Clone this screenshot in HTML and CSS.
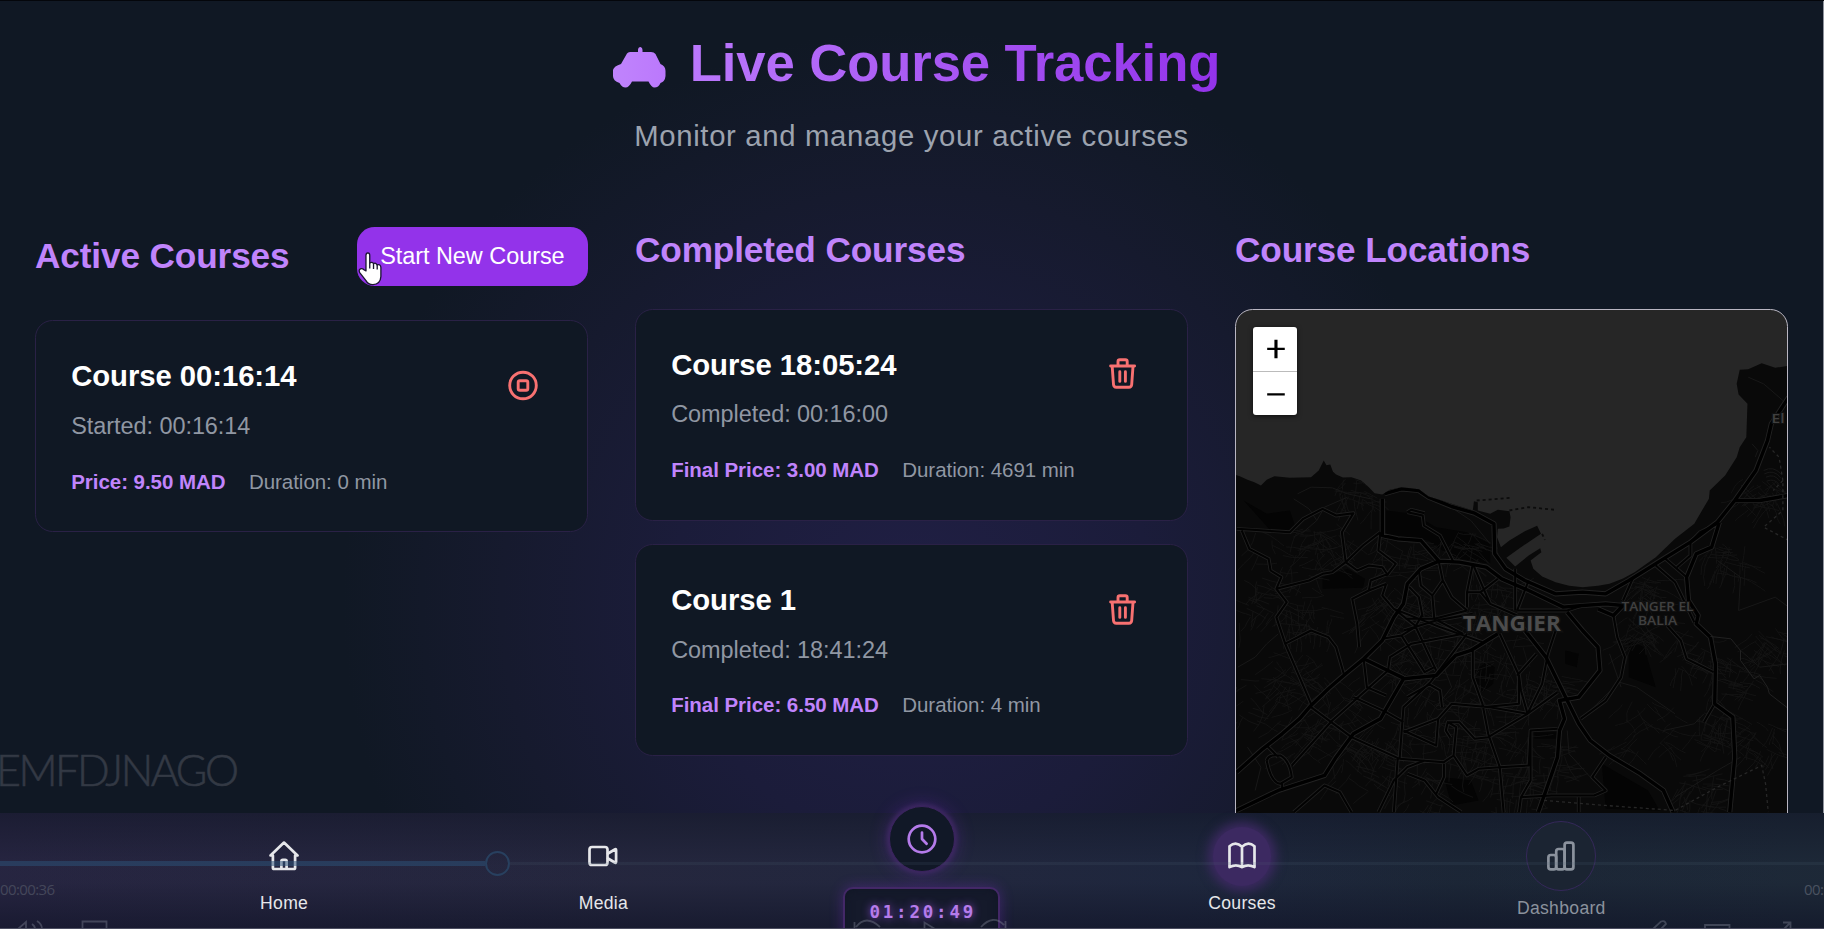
FILE: index.html
```html
<!DOCTYPE html>
<html lang="en">
<head>
<meta charset="utf-8">
<title>Live Course Tracking</title>
<link rel="stylesheet" href="styles.css">
</head>
<body>
<svg class="defs" width="0" height="0">
  <symbol id="trash" viewBox="0 0 35 35">
    <path d="M5.6 10h24M13 9.5V5.6q0-1.8 1.8-1.8h5.6q1.8 0 1.8 1.8v3.9M7.2 10.5l1.3 18q.2 2.8 2.8 2.8h12.6q2.6 0 2.8-2.8l1.3-18M14.8 15.8v9.6M20.4 15.8v9.6"/>
  </symbol>
</svg>
<div class="screen">
  <main class="content">
    <header class="hero">
      <h1 class="title">
        <svg class="taxi" viewBox="0 0 54 42">
          <defs><linearGradient id="taxiFill"><stop offset="0" stop-color="#c084fc"/><stop offset="1" stop-color="#bb78fc"/></linearGradient></defs>
          <path fill="url(#taxiFill)" d="M15 6.5Q16 5 18 5H26V3Q26.200 0 28.500 0Q30.500 .5 30.500 3V5H39Q42 5 43.500 7L48.500 17Q53.500 19 53.500 24V29Q53 34.500 48.500 36Q46.500 40.500 42.500 40.500Q39.500 40.500 36.500 34.500H20Q17 40.500 13.500 40.500Q10 40.500 7.500 36Q1 34 1 29V23Q2 19 9 17Z"/>
        </svg>
        <span class="title-text">Live Course Tracking</span>
      </h1>
      <p class="subtitle">Monitor and manage your active courses</p>
    </header>
    <div class="columns">
      <section>
        <div class="section-head">
          <h2>Active Courses</h2>
          <button class="start">Start New Course</button>
        </div>
        <article class="card">
          <div>
            <h3>Course 00:16:14</h3>
            <p class="when">Started: 00:16:14</p>
            <p class="facts"><b>Price: 9.50 MAD</b><span>Duration: 0 min</span></p>
          </div>
          <button class="act"><svg viewBox="0 0 35 35"><circle cx="18" cy="17.5" r="13.300"/><rect x="13.200" y="12.700" width="9.600" height="9.600" rx="1.600"/></svg></button>
        </article>
      </section>
      <section>
        <h2>Completed Courses</h2>
        <div class="stack">
          <article class="card">
            <div>
              <h3>Course 18:05:24</h3>
              <p class="when">Completed: 00:16:00</p>
              <p class="facts"><b>Final Price: 3.00 MAD</b><span>Duration: 4691 min</span></p>
            </div>
            <button class="act"><svg><use href="#trash"/></svg></button>
          </article>
          <article class="card">
            <div>
              <h3>Course 1</h3>
              <p class="when">Completed: 18:41:24</p>
              <p class="facts"><b>Final Price: 6.50 MAD</b><span>Duration: 4 min</span></p>
            </div>
            <button class="act"><svg><use href="#trash"/></svg></button>
          </article>
        </div>
      </section>
      <section>
        <h2>Course Locations</h2>
        <div class="map">
          <svg class="map-art" viewBox="0 0 553 600">
            <defs>
              <clipPath id="landClip"><use href="#land"/></clipPath>
            </defs>
            <g transform="matrix(.3852 0 0 .3333 -15.500 190.500)">
              <path id="land" class="land" d="M30-80L50-73 70-62 88-55 105-45 120-62 140-73 180-68 235-70 255-90 268-120 275-106 285-108 292-86 300-78 318-69 340-70 365-60 385-40 400-22 420-18 440-32 470-40 515-34 540-12 600 10 645 26 655 30 658 2 668 5 668 30 700 40 720 28 750 32 753 50 750 78 735 84 720 85 718 110 728 140 750 120 790 92 822 76 832 100 780 140 742 172 765 198 800 165 830 143 833 155 805 180 812 205 835 228 870 245 905 256 940 260 980 256 1010 250 1045 234 1075 215 1130 170 1180 115 1230 70 1255 20 1268-5 1270-30 1310-75 1340-130 1348-160 1365-190 1368-290 1345-318 1340-350 1348-392 1370-394 1405-412 1440-398 1480-405V1250H30Z"/>
              <g clip-path="url(#landClip)">
                <g class="parks"><path d="M265 230L330 205 375 235 370 262 265 265ZM660 510L690 485 712 500 708 550 680 575 660 540ZM500 40L560 80 640 95 700 130 700 190 600 170 540 120 430 100 430 30ZM895 450L930 460 925 500 895 490ZM580 830L650 840 670 900 600 915ZM815 695H875V715H815ZM990 790L1110 870 1140 930 1000 925ZM1060 420L1100 440 1130 560 1060 530ZM60 0L120 40 180 30 200 100 130 90Z"/></g>
                <path id="minor" class="minor"/>
                <path class="lane" d="M560-10L650 60 700 130M1290 180L1350 230 1345 330 1440 290 1475 320M900 690L905 760 960 830M1180 640L1080 560 1035 545 960 630M1150 690L1230 670 1255 640M1010 460L1040 560M1370-370L1410-350 1460-300M1380-170L1395-150 1388-130M1475 490L1400 500 1370 470 1350 450M45 500L90 470 120 430 150 400M90 870L105 800 70 740M1180 890L1290 810 1350 770M200-20L235-40 290-38 330-20 390-5M250 60L270 20 330-10M190-5L230 25 250 60 210 100M560 620L600 560 580 500M1410-90q25-15 45 10M1412-80q25-15 42 12M1416-70q22-12 36 12M1418-58q20-10 32 10"/>
                <g id="mains"></g>
                <path class="lane bright" d="M1272 408L1325 415 1350 450 1350 480 1385 535 1400 525 1420 560 1425 580 1475 625"/>
                <path class="rail" d="M840 900L1000 915 1180 930 1290 860 1405 795 1415 850 1422 935M1475 120L1410 80 1460 30 1460-60 1435-30M1460-60L1450-130 1425-160"/>
              </g>
              <path class="pier" d="M665 0L752-8M750 30L800 20 868 28M835 100L842 118"/>
            </g>
            <g class="labels">
              <text class="city" x="275.800" y="320.500" textLength="98" lengthAdjust="spacingAndGlyphs">TANGIER</text>
              <text x="421.500" y="301" textLength="72" lengthAdjust="spacingAndGlyphs">TANGER EL</text>
              <text x="421.500" y="314.500" textLength="39" lengthAdjust="spacingAndGlyphs">BALIA</text>
              <text x="542" y="112.500" textLength="13" lengthAdjust="spacingAndGlyphs">El</text>
            </g>
          </svg>
          <div class="zoom">
            <button><svg viewBox="0 0 44 44"><path d="M14 22.500h18"/><path class="bar" d="M23 13v19"/></svg></button>
            <button><svg viewBox="0 0 44 44"><path d="M14 23h18"/></svg></button>
          </div>
        </div>
      </section>
    </div>
    <div class="watermark">EMFDJNAGO</div>
  </main>

  <nav class="nav">
    <a class="item"><span class="disc"><svg viewBox="0 0 30 30"><path d="M3.900 14.500H1.500L15 1.600 28.500 14.500H26.100M3.900 14.500v12.200q0 1.300 1.300 1.300h19.600q1.300 0 1.300-1.300v-12.200M12.400 28v-7.800q0-1.400 1.400-1.400h2.400q1.400 0 1.400 1.400V28"/></svg></span><span>Home</span></a>
    <a class="item"><span class="disc"><svg viewBox="0 0 30 30"><rect x="1.500" y="6" width="18" height="18" rx="2.600"/><path d="M20 12.500l6.800-4q1.300-.8 1.300.7v11.600q0 1.500-1.300.7L20 17.500"/></svg></span><span>Media</span></a>
    <div class="clock">
      <span class="clock-disc"><svg viewBox="0 0 30 30"><circle cx="15" cy="15" r="13.300"/><path d="M15 8.500V15l4.600 4.800"/></svg></span>
      <span class="timer">01:20:49</span>
    </div>
    <a class="item current"><span class="disc"><svg viewBox="0 0 30 30"><path d="M15 5.800Q9-.2 2.500 5.200V26.200Q9 22.500 15 26.200Q21 22.500 27.500 26.200V5.200Q21-.2 15 5.800V26.200"/></svg></span><span>Courses</span></a>
    <a class="item dim"><span class="disc large"><svg viewBox="0 0 30 30"><rect x="2.400" y="14" width="7.800" height="14.300" rx="2.400"/><rect x="10.200" y="8" width="8.400" height="20.300" rx="2.400"/><rect x="18.600" y="1.700" width="8.800" height="26.600" rx="2.400"/></svg></span><span>Dashboard</span></a>
  </nav>

  <div class="player">
    <div class="track"><i class="played"></i><i class="knob"></i><i class="rest"></i></div>
    <div class="times"><span>00:00:36</span><span class="end">00:</span></div>
    <svg class="controls" viewBox="0 0 1824 12"><path d="M18 12L26 5V12M32 7q3 2 3 5M37 4q5 3 5 8M82.500 12V4.500h24V12M854.500 12V5M856 10Q866-3 880 10M924.500 12V5.500L935 12M981 10Q993-3 1004 8M1005.500 4v8M1653 12L1661 4.500q4-1.500 5 2.500L1661 12M1705 12V8h24.500v4M1783 5.500h7.500V12M1784 12l6.500-6.500"/></svg>
  </div>
  <svg class="cursor" viewBox="0 0 26 36"><path d="M8.200 20V3.600Q8.300 1 10.200 1Q12.200 1.100 12.200 3.600V11.600Q14.800 10 16.200 12.300Q18.700 11 20 13.600Q23.800 12.600 24 16.500V26Q23.500 34.300 15.500 34.500Q10.500 34.500 8 30L1.600 21.800Q0 18.500 3 17.600Q5 17.500 6 18.800Z"/><path d="M12.200 11.500v6M16.200 12.500v5.500M20.100 13.800v4.700"/></svg>
</div>
<script src="map.js"></script>
</body>
</html>
```
FILE: styles.css
```css
:root { --violet: #c084fc; }
* { box-sizing: border-box; margin: 0; padding: 0; }
body { background: #111827; font-family: "Liberation Sans", Arial, sans-serif; color: #fff; }
.defs { position: absolute; }
button { font: inherit; color: inherit; border: 0; background: none; }
.screen {
  position: relative; width: 1824px; height: 929px; overflow: hidden;
  display: flex; flex-direction: column;
  background: radial-gradient(circle 570px at 912px 600px, #201f44 0%, #1b1c3a 42%, #161a2e 72%, #101824 100%) #101824;
}
.screen::after { content: ""; position: absolute; inset: 0; pointer-events: none; border-top: 1px solid #04060b; border-bottom: 1px solid #4b4d60; }
.content { position: relative; height: 813px; overflow: hidden; padding: 34px 35px 0 35px; flex: none; border-right: 1px solid #8e929c; }
.hero { text-align: center; height: 193px; }
.title { display: flex; justify-content: center; align-items: center; gap: 24px; height: 58.6px; font-size: 52.7px; line-height: 58.6px; padding-left: 9px; letter-spacing: -.12px; }
.taxi { width: 54px; height: 42px; margin-top: 9px; }
.title-text { background: linear-gradient(90deg, #bb78fc, #9333ea); -webkit-background-clip: text; background-clip: text; color: transparent; white-space: nowrap; }
.subtitle { margin-top: 22.2px; font-size: 29.3px; line-height: 41px; letter-spacing: .67px; color: #9ca3af; }
.columns { display: grid; grid-template-columns: repeat(3, minmax(0, 1fr)); gap: 47px; }
.section-head { display: flex; justify-content: space-between; align-items: center; height: 58.6px; margin-bottom: 34.6px; }
h2 { font-size: 35.2px; line-height: 46.9px; letter-spacing: -.12px; color: var(--violet); white-space: nowrap; }
section > h2 { margin-bottom: 34.6px; }
.start { height: 58.6px; padding: 0 23.4px; border-radius: 17.6px; background: #9333ea; font-size: 23.44px; letter-spacing: -.03px; white-space: nowrap; }
.stack { display: grid; gap: 23.4px; }
.card { display: flex; justify-content: space-between; align-items: flex-start; height: 212px; padding: 34.9px 35.2px; border: 1px solid #2a2146; border-radius: 17.6px; background: #101824; white-space: nowrap; }
.card h3 { margin-top: -.8px; font-size: 29.3px; line-height: 41px; letter-spacing: -.07px; }
.when { margin-top: 12.700px; font-size: 23.44px; line-height: 35.2px; letter-spacing: -.04px; color: #9097a3; }
.facts { display: flex; gap: 23.4px; margin-top: 22.4px; font-size: 20.5px; line-height: 29.3px; letter-spacing: -.04px; color: #9097a3; }
.facts b { color: var(--violet); }
.act { flex: none; width: 58.6px; height: 58.6px; padding: 11.8px; }
.act svg { display: block; width: 35px; height: 35px; fill: none; stroke: #f87171; stroke-width: 2.9; stroke-linecap: round; stroke-linejoin: round; }
.map { position: relative; height: 602px; border: 1px solid #b9b6c2; border-radius: 17.6px; overflow: hidden; background: #262626; }
.map-art { display: block; width: 553px; height: 600px; }
.map-art path { vector-effect: non-scaling-stroke; fill: none; stroke-linejoin: round; }
.map-art .land { fill: #090909; }
.map-art .parks path { fill: #040404; }
.minor { stroke: #151515; stroke-width: .8; }
.lane { stroke: #181818; stroke-width: 1; }
.lane.bright { stroke: #222; }
.casing { stroke: #1f1f1f; stroke-width: 3.8; }
.road { stroke: #020202; stroke-width: 2; }
.casing.main { stroke: #222; stroke-width: 5.2; }
.road.main { stroke: #000; stroke-width: 3.4; }
.rail, .pier { stroke: #272727; stroke-width: 1.3; stroke-dasharray: 3 3; }
.map-art .pier { stroke: #0c0c0c; stroke-width: 1.8; }
.labels text { font: 600 12.500px "Open Sans", sans-serif; fill: #404040; text-anchor: middle; stroke: #101010; stroke-width: 2px; paint-order: stroke; }
.labels .city { font-size: 21px; font-weight: 700; fill: #4c4c4c; stroke-width: 3px; }
.zoom { position: absolute; left: 17px; top: 17px; width: 44px; height: 88px; background: #fff; border-radius: 3px; box-shadow: 0 1px 5px rgba(0,0,0,.65); display: grid; }
.zoom button { height: 44px; }
.zoom button + button { border-top: 1px solid #bbb; }
.zoom svg { display: block; width: 44px; height: 43px; fill: none; stroke: #000; stroke-width: 2.3; }
.zoom .bar { stroke-width: 3.2; }
.watermark { position: absolute; left: -4px; top: 740px; font: 300 43px/60px Lato, sans-serif; letter-spacing: -2.450px; color: #333944; -webkit-text-stroke: .6px #333944; }
.nav {
  position: relative; height: 116px; flex: none; padding: 0 103px 0 124.5px;
  display: grid; grid-template-columns: repeat(5, 1fr); align-items: center; justify-items: center;
  background:
    linear-gradient(180deg, rgba(14,18,34,.5) 0%, rgba(14,18,34,.1) 45%, rgba(14,18,34,.1) 60%, rgba(14,17,36,.6) 100%),
    linear-gradient(90deg, #292744 0%, #272941 35%, #242941 52%, #202940 65%, #1d2838 80%, #1f2b3a 98%);
}
.item { display: flex; flex-direction: column; align-items: center; gap: 6px; font-size: 17.6px; line-height: 23.4px; letter-spacing: .3px; color: #e6e7ea; }
.disc { width: 58.6px; height: 58.6px; display: grid; place-items: center; border-radius: 50%; }
.disc svg, .clock-disc svg { width: 30px; height: 30px; fill: none; stroke: currentColor; stroke-width: 2.7; stroke-linecap: round; stroke-linejoin: round; }
.current .disc { background: #3c2961; box-shadow: 0 0 11px 5px #3c2961; }
.dim { color: #8b929d; }
.large { width: 70px; height: 70px; background: #1b2432; border: 1px solid #35285a; }
.clock { align-self: start; margin: -7px 2px 0 0; height: 123px; overflow: visible; display: flex; flex-direction: column; align-items: center; gap: 15px; color: #b57bea; }
.clock-disc { flex: none; width: 66px; height: 66px; display: grid; place-items: center; border-radius: 50%; background: #111827; border: 1px solid #3b245f; box-shadow: 0 0 4px 2px #3e2862, 0 0 20px rgba(147,51,234,.3); }
.timer { flex: none; width: 157px; height: 60px; padding-left: 2px; text-align: center; border: 2px solid #432867; border-radius: 10px; background: #151a2b; font: 700 17.5px/47px "DejaVu Sans Mono", monospace; letter-spacing: 2.8px; text-shadow: 0 0 9px #8b4bd0; box-shadow: inset 0 0 10px #101625, 0 0 14px rgba(147,51,234,.3); }
.player { position: absolute; left: 0; right: 0; bottom: 0; height: 78px; pointer-events: none; }
.track { display: flex; align-items: center; height: 25px; }
.played { width: 485px; height: 5px; background: rgba(45,82,120,.52); }
.knob { width: 25px; height: 25px; border: 2.500px solid #28405f; border-radius: 50%; }
.rest { flex: 1; height: 3px; background: rgba(80,104,120,.15); }
.times { display: flex; justify-content: space-between; padding-top: 1px; font: 15px/24px "Open Sans", sans-serif; letter-spacing: -.6px; color: #44475a; }
.end { width: 20px; overflow: hidden; color: #4a5260; }
.controls { position: absolute; left: 0; bottom: 0; width: 1824px; height: 12px; fill: none; stroke: rgba(125,128,145,.42); stroke-width: 1.8; }
.cursor { position: absolute; left: 358px; top: 252px; width: 25px; height: 34px; fill: #fff; stroke: #1b1530; stroke-width: 1.4; stroke-linejoin: round; }
```
FILE: map.js
```js
// Trunk roads and main streets, each drawn as a grey casing below a black centre line.
var streets = 'M42 85L180 95 215 55 265 25 300 45 345 38 315 95 325 185 290 215 265 220 230 240 145 265M55 90L75 145 125 175 130 210 158 230 145 265 172 305 145 350 168 430 235 610M325 185L370 135 415 95M325 185L355 210 385 195 420 200 435 225M485 35L525 45 528 75 570 105 605 185M485 35L495 28 530 38M385 270L390 240 435 220 455 190 410 150 415 95M360 440L355 370 342 295 385 270 430 250M167 430L235 390 280 410 300 440 320 520M372 480L380 560 430 585M120 735L150 770M185 795L290 660 435 510 440 470 495 430 630 400M235 620L340 710 465 775M345 590L430 635 475 665M465 775L475 620 545 545 640 400M465 775L580 785 605 765 640 825 670 805 725 800 800 795 805 690 875 685M605 765L612 680 590 665 585 690 597 712M590 665L620 665 660 715 695 710 797 640 875 575M475 695L565 655 600 610 700 620 797 640M450 935L460 775M410 935L450 840 485 800 530 780M485 820L530 840 565 890 625 935M560 880L580 830 580 790M735 935L725 800 695 700 680 610 655 530 655 450M775 935L780 890 805 840 805 690M780 890L860 885 970 885 1000 870 965 830 1000 770M930 890V935M1020 345L1030 410 1050 470 1040 530 1000 600 935 655M1160 375L1195 420 1210 475 1280 515M1130 195L1180 245 1205 305 1230 365M1155 175L1210 230M1185 200L1220 165 1220 125 1245 95 1290 70M1070 235L1045 300M800 240L770 330M765 205V330M770 330H900L940 315M655 190L640 275V320M655 190L700 310 770 345M640 275H675L720 235M675 275L700 310M577 240L550 285 555 355 630 400M515 210L520 255 550 285M490 260L515 290 525 350M567 185L577 240 600 290 640 330M655 340L560 360 475 390M480 355L555 355 640 330M420 415L470 405 505 380 525 340M450 325L505 375 560 510M470 405L530 515 555 500M430 250L420 285 450 325 570 380 680 425M540 550L570 570 575 620M820 460L770 525M725 400L775 525 780 570 797 640 835 550 850 460 870 390M775 525V610L680 620M190 935L270 855 310 875 340 935M120 780Q125 760 155 765Q180 780 185 830L155 850Q130 845 120 780M160 850V870M545 550L485 590M475 690L560 735 565 655M1255 665L1280 615';
var trunks = [
  'M42 815L110 745 160 700 205 655 235 615 280 565 325 520 372 475 420 420 450 350 475 310 485 250 520 205 567 182 620 185 690 200 730 235 800 270 890 320 940 315 1000 310 1045 315 1020 345 980 325',
  'M42 930L150 870 270 825 300 770 345 700 415 655 445 595 475 535 560 525 610 465 650 450 720 400',
  'M372 475L475 533',
  'M770 360L845 470 900 600 930 670 960 720 1010 765 1090 820 1150 870 1175 935',
  'M900 335L940 390 980 440 985 510 930 590 880 600 893 655 880 690 875 770 845 870 825 935',
  'M420-5V105L460 115 520 120 567 182',
  'M425-20L470-35 515-30 540-10 600 18 660 38 710 70 712 160 740 205 790 240 870 280 940 275 1000 280 1060 240 1150 175 1220 125 1290 65 1335 0 1390-90 1420-180 1430-230 1475-310',
  'M1335 0L1400 0 1475-15',
  'M1295 65L1275 140 1235 160 1210 230 1215 300 1240 345 1235 370 1272 410 1285 490 1283 610 1330 650 1335 770 1322 935'
].join('');
var NS = 'http://www.w3.org/2000/svg';
var mains = document.getElementById('mains');
[['casing', streets], ['casing main', trunks], ['road', streets], ['road main', trunks]].forEach(function (layer) {
  var p = document.createElementNS(NS, 'path');
  p.setAttribute('class', layer[0]);
  p.setAttribute('d', layer[1]);
  mains.appendChild(p);
});

// Residential streets: small jittered grids, [x, y, radius, angle].
var seed = 7;
function rnd() { seed = (seed * 16807) % 2147483647; return seed / 2147483647; }
var areas = [
  [120, 600, 80, .5], [200, 520, 70, .8], [180, 180, 90, .3], [290, 130, 60, .9], [460, 170, 60, .2],
  [620, 140, 50, .5], [700, 290, 60, .2], [500, 320, 60, .6], [420, 340, 50, .9], [600, 430, 60, .3],
  [720, 480, 80, .2], [480, 480, 60, .7], [600, 580, 80, .5], [720, 660, 90, .3], [560, 700, 90, .1],
  [400, 700, 70, .6], [370, 800, 80, .5], [250, 720, 70, .7], [650, 760, 80, .3], [840, 790, 60, .1],
  [840, 560, 50, .4], [1100, 400, 50, .8], [1230, 450, 60, .4], [1310, 190, 60, .3], [1330, 530, 60, .5],
  [1100, 680, 80, .7], [1280, 680, 50, .4], [1240, 880, 60, .2], [520, 880, 80, .4], [760, 880, 60, .2],
  [1430, 430, 50, .6], [1100, 270, 40, .5], [300, 600, 70, .7], [350, -20, 50, .3], [1400, -20, 50, .8],
  [100, 300, 70, .4], [230, 350, 60, .2], [1390, 720, 60, .5]
];
var d = '';
areas.forEach(function (a) {
  for (var i = 0; i < 34; i++) {
    var t = a[3] + (rnd() < .5 ? 0 : 1.57) + (rnd() - .5) * .5;
    var x = a[0] + (rnd() - .5) * 2 * a[2], y = a[1] + (rnd() - .5) * 2 * a[2];
    d += 'M' + x.toFixed(1) + ' ' + y.toFixed(1);
    for (var k = 0; k < 3; k++) {
      t += (rnd() - .5) * .6;
      var len = 8 + rnd() * 22;
      x += Math.cos(t) * len; y += Math.sin(t) * len;
      d += 'L' + x.toFixed(1) + ' ' + y.toFixed(1);
    }
  }
});
document.getElementById('minor').setAttribute('d', d);
```
